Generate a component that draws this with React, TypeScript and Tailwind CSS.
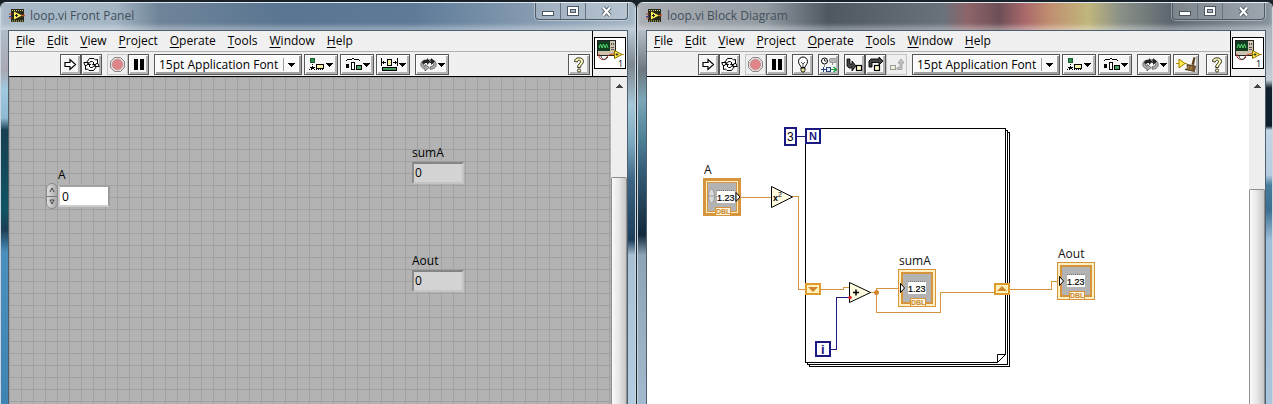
import { useState, type ReactNode } from "react"

const MENUS = ["File", "Edit", "View", "Project", "Operate", "Tools", "Window", "Help"]

const FONTS = ["15pt Application Font", "13pt System Font", "13pt Dialog Font"]

const Pixels = ({ w, h, children }: { w: number; h: number; children: ReactNode }) => (
  <svg width={w} height={h} viewBox={`0 0 ${w} ${h}`} shapeRendering="crispEdges" className="shrink-0" aria-hidden="true">
    {children}
  </svg>
)

const RunIcon = () => (
  <svg width="13" height="13" viewBox="0 0 13 13" aria-hidden="true">
    <path d="M1 4.5h5v-3l5.5 5-5.5 5v-3H1z" fill="#fff" stroke="#000" strokeWidth="1.2" />
  </svg>
)

const RunLoopIcon = () => (
  <svg width="17" height="15" viewBox="0 0 17 15" aria-hidden="true">
    <g fill="#fff" stroke="#000" strokeWidth="1" strokeLinejoin="round">
      <path d="M3.500 5.500L6.500 1.500H11l1.500 1.500 2-.5v5H9.500L11 6 9.500 4.500H7.500L6 6.500z" />
      <path d="M13.500 9.500l-3 4H6L4.500 12l-2 .5v-5h5L6 9l1.500 1.500h2L11 8.500z" />
      <path d="M.8 5.500h4.500l-1.500 3H2z" />
      <path d="M16.200 9.500h-4.500l1.500-3H15z" />
    </g>
  </svg>
)

const AbortIcon = () => (
  <svg width="17" height="17" viewBox="0 0 17 17" aria-hidden="true">
    <path d="M5.500 1.500h6l4 4v6l-4 4h-6l-4-4v-6z" fill="#e3d6d6" stroke="#8d8585" />
    <circle cx="8.500" cy="8.500" r="5" fill="#e08487" stroke="#c58f90" />
  </svg>
)

const PauseIcon = () => (
  <Pixels w={10} h={11}>
    <path d="M0 0h4v11H0zM6 0h4v11H6z" />
  </Pixels>
)

const BulbIcon = () => (
  <svg width="14" height="17" viewBox="0 0 14 17" aria-hidden="true">
    <path d="M5 11.500c0-2-2.500-3-2.500-6a4.500 4.500 0 0 1 9 0c0 3-2.500 4-2.500 6z" fill="#fff" stroke="#000" />
    <path d="M5 6l2 2 2-2M7 8v3" fill="none" stroke="#222" strokeWidth=".8" />
    <path d="M5 12h4v2.500L8 16H6l-1-1.500z" fill="#efe9a0" stroke="#000" strokeWidth=".9" />
  </svg>
)

const RetainIcon = () => (
  <svg width="18" height="16" viewBox="0 0 18 16" aria-hidden="true">
    <circle cx="4.500" cy="4" r="3" fill="#fff" stroke="#000" />
    <path d="M4.500 2v2h2" fill="none" stroke="#000" strokeWidth=".8" />
    <rect x="9.500" y="1.500" width="7" height="4" rx="1" fill="#b5b5b5" stroke="#999" />
    <path d="M4.500 7v3M12.500 6v2" stroke="#888" />
    <path d="M1 12.500h5M3.500 10v5" stroke="#27407c" />
    <rect x="6.500" y="10.500" width="4" height="4" fill="#dfe9ff" stroke="#27407c" />
    <path d="M11 12.500h5M13.500 10l3 2.500-3 2.500" fill="none" stroke="#129a35" strokeWidth="1.2" />
  </svg>
)

const StepIntoIcon = () => (
  <svg width="17" height="14" viewBox="0 0 17 14" aria-hidden="true">
    <path d="M1 1h3v5h2V3l4 5-4 5v-3H3L1 8z" fill="#444" stroke="#000" strokeWidth=".8" />
    <rect x="10.500" y="7.500" width="5" height="5" fill="#fffbd0" stroke="#000" strokeWidth="1.2" />
  </svg>
)

const StepOverIcon = () => (
  <svg width="16" height="15" viewBox="0 0 16 15" aria-hidden="true">
    <path d="M1 10V4l2-2h8V0l4 4-4 4V5.500H4V10z" fill="#444" stroke="#000" strokeWidth=".9" />
    <rect x="6.500" y="8.500" width="5" height="5" fill="#fffbd0" stroke="#000" strokeWidth="1.2" />
  </svg>
)

const StepOutIcon = () => (
  <svg width="16" height="14" viewBox="0 0 16 14" aria-hidden="true">
    <rect x="1.500" y="7.500" width="5" height="4" fill="#f3f1dc" stroke="#999" />
    <path d="M8 11.500h5V5h2l-3-4-3 4h2v4.500H8z" fill="#c4c4c4" stroke="#999" strokeWidth=".8" />
  </svg>
)

const DropArrow = () => (
  <Pixels w={7} h={4}>
    <path d="M0 0h7v1H0zM1 1h5v1H1zM2 2h3v1H2zM3 3h1v1H3z" />
  </Pixels>
)

const AlignIcon = () => (
  <Pixels w={16} h={13}>
    <path d="M1 0h5v5H1z" fill="#1d5f33" />
    <path d="M2 1h3v3H2z" fill="#2f8a4c" />
    <path d="M3 6h1v1H3zM3 8h1v2H3zM1 9h5v1H1zM2 10h3v1H2zM0 11h1v1H0zM2 12h1v-1H2zM5 11h1v1H5z" />
    <path d="M7 6h8v5H7z" />
    <path d="M8 7h6v3H8z" fill="#f7f3a6" />
    <path d="M7 11h1v1H7zM9 11h1v1H9zM11 11h1v1h-1zM13 11h1v1h-1z" />
  </Pixels>
)

const DistributeIcon = () => (
  <Pixels w={17} h={13}>
    <path d="M1 2h1v1H1zM2 1h5v1H2zM7 0h2v1H7zM9 1h5v1H9zM14 2h1v1h-1zM1 6h3v4H1zM6 4h4v8H6zM11 7h6v5h-6z" />
    <path d="M7 5h2v6H7z" fill="#fff" />
    <path d="M12 8h4v3h-4z" fill="#46a562" />
  </Pixels>
)

const ResizeIcon = () => (
  <Pixels w={17} h={13}>
    <path d="M0 0h1v8H0zM16 0h1v8h-1zM1 4h4v1H1zM2 3h1v3H2zM12 4h4v1h-4zM14 3h1v3h-1zM6 1h5v7H6zM1 9h15v4H1z" />
    <path d="M7 2h3v5H7z" fill="#f7f3a6" />
    <path d="M2 10h13v2H2z" fill="#3f9559" />
  </Pixels>
)

const ReorderIcon = () => (
  <svg width="17" height="14" viewBox="0 0 17 14" aria-hidden="true">
    <path d="M5 2C2 2.500.8 4.500.8 6.500.8 9 3 10.500 5 10.800V13l4-3.500-4-3v2C3.500 8 3 7 3.500 6L6 4z" fill="#b0b0b0" stroke="#555" strokeWidth=".8" />
    <path d="M12 2c3 .5 4.200 2.500 4.200 4.500 0 3-2.200 4.500-6.200 4.800V8.800c3-.3 4-1.300 3.500-2.800L11 4z" fill="#b0b0b0" stroke="#555" strokeWidth=".8" />
    <path d="M2 4.500C3 2.500 5 1.500 7 1.500V0l3.500 3.500L7 7V5C5 5 4 5.500 3.500 6.500z" fill="#222" />
    <path d="M9 1.500h2V0l4 3.500L11 7V5H9l2-1.500z" fill="#222" />
  </svg>
)

const CleanUpIcon = () => (
  <svg width="21" height="15" viewBox="0 0 21 15" aria-hidden="true">
    <path d="M0 6.500h11" stroke="#b88a00" />
    <path d="M3 2v9l6-4.500z" fill="#fff04a" stroke="#a57c00" />
    <path d="M17.500 0l2 .5L18 8l-2.500-.5z" fill="#5a3d1c" />
    <path d="M11 7.500l8.500 1.500L18.500 14.500 9 12.500l2.500-1z" fill="#7d5a2b" stroke="#3f2c10" strokeWidth=".8" />
    <path d="M13 9l-1.500 3M15.500 9.500l-1 3.500" stroke="#c9a662" strokeWidth=".8" />
  </svg>
)

const HelpIcon = () => (
  <svg width="12" height="16" viewBox="0 0 12 16" aria-hidden="true">
    <path
      d="M1.500 4.500C1.500 2 3.500.8 6 .8s4.500 1.400 4.500 3.700C10.500 7 7.500 7.500 7.500 10.500h-3C4.500 7 7.500 6.500 7.500 4.700 7.500 3.700 7 3.300 6 3.300s-1.600.5-1.600 1.700z"
      fill="#fdf9b0"
      stroke="#222"
      strokeWidth=".9"
    />
    <circle cx="6" cy="13.500" r="1.600" fill="#fdf9b0" stroke="#222" strokeWidth=".9" />
  </svg>
)

const ViIcon = () => (
  <svg width="16" height="16" viewBox="0 0 16 16" aria-hidden="true">
    <rect x="2" y="1" width="13" height="13" fill="#2a2a18" />
    <path d="M3 2.500h12M3 13h12" stroke="#d8d27c" strokeDasharray="1 1" />
    <path d="M0 6h3M0 10h3" stroke="#c0392b" />
    <path d="M0 8.500h3" stroke="#24489a" />
    <path d="M13 7.500h3" stroke="#d0552b" strokeWidth="1.5" />
    <path d="M5 3.500v8l8-4z" fill="#ffee57" />
    <path d="M6 7.500h3M7.500 6v3" stroke="#222" />
  </svg>
)

const ConnectorIcon = () => (
  <svg width="32" height="32" viewBox="0 0 32 32" className="block" role="img" aria-label="VI icon 1">
    <rect x=".5" y=".5" width="31" height="31" fill="#fff" stroke="#000" />
    <g shapeRendering="crispEdges">
      <rect x="3" y="3" width="19" height="16" fill="#222" />
      <rect x="4" y="4" width="17" height="14" fill="#cfc2ae" />
      <rect x="4" y="4" width="12" height="10" fill="#123d1e" />
      <path d="M17 6h1v2h-1zM19 6h1v2h-1zM17 10h3v1h-3zM17 12h3v1h-3z" fill="#555" />
    </g>
    <path d="M5 11l1.500-4L8 11l1.500-4 1.500 4 1.500-4 1.500 4" fill="none" stroke="#52d66e" />
    <path d="M5 17v3c3 4 6 3 8 0s5-3 8-3" fill="none" stroke="#c2312a" />
    <path d="M7 19c1 5 5 4 7 1" fill="none" stroke="#333" />
    <path d="M27 17.500h3M17 17.500h4" stroke="#d98c1e" />
    <path d="M20.500 13.500v8l7.500-4z" fill="#ffee4d" stroke="#8d6f00" />
    <path d="M21.500 17.500h3M23 16v3" stroke="#222" strokeWidth=".8" />
    <text x="24" y="30" fontSize="9" fontFamily="Open Sans, sans-serif">1</text>
  </svg>
)

interface ToolButtonProps {
  label: string
  width?: string
  disabled?: boolean
  children: ReactNode
}

function ToolButton({ label, width = "w-[21px]", disabled, children }: ToolButtonProps) {
  const look = disabled
    ? "border-[#c4c4c4] bg-[#efefef]"
    : "border-[#585858] bg-[#f6f6f6] shadow-[inset_1px_1px_0_#ffffff,inset_-2px_-2px_0_#b4b4b4]"
  return (
    <button
      type="button"
      aria-label={label}
      disabled={disabled}
      className={`flex h-[21px] shrink-0 items-center justify-center gap-px border ${width} ${look}`}
    >
      {children}
    </button>
  )
}

function FontPicker() {
  return (
    <div className="relative w-[148px]">
      <select
        aria-label="Text settings"
        className="block h-[21px] w-full appearance-none border border-[#585858] bg-[#fafafa] pl-[4px] text-[12px] leading-[17px] text-black shadow-[inset_1px_1px_0_#ffffff,inset_-2px_-2px_0_#a0a0a0]"
      >
        {FONTS.map((font) => (
          <option key={font}>{font}</option>
        ))}
      </select>
      <span className="pointer-events-none absolute inset-y-[4px] right-[7px] flex items-center border-l border-[#a0a0a0] pl-[4px]">
        <DropArrow />
      </span>
    </div>
  )
}

const Group = ({ gap = "gap-0", children }: { gap?: string; children: ReactNode }) => (
  <div className={`flex shrink-0 ${gap}`}>{children}</div>
)

function Toolbar({ diagram }: { diagram?: boolean }) {
  return (
    <div role="toolbar" className="flex h-[24px] items-start gap-[5px] pt-[2px] pr-[2px] pl-[51px]">
      <Group>
        <ToolButton label="Run"><RunIcon /></ToolButton>
        <ToolButton label="Run continuously"><RunLoopIcon /></ToolButton>
      </Group>
      <Group>
        <ToolButton label="Abort execution" disabled><AbortIcon /></ToolButton>
        <ToolButton label="Pause"><PauseIcon /></ToolButton>
      </Group>
      {diagram && (
        <>
          <ToolButton label="Highlight execution"><BulbIcon /></ToolButton>
          <ToolButton label="Retain wire values"><RetainIcon /></ToolButton>
          <Group>
            <ToolButton label="Step into"><StepIntoIcon /></ToolButton>
            <ToolButton label="Step over"><StepOverIcon /></ToolButton>
            <ToolButton label="Step out" disabled><StepOutIcon /></ToolButton>
          </Group>
        </>
      )}
      <Group gap="gap-[2px]">
        <FontPicker />
        <ToolButton label="Align objects" width="w-[34px]"><AlignIcon /><DropArrow /></ToolButton>
        <ToolButton label="Distribute objects" width="w-[34px]"><DistributeIcon /><DropArrow /></ToolButton>
        {!diagram && (
          <ToolButton label="Resize objects" width="w-[34px]"><ResizeIcon /><DropArrow /></ToolButton>
        )}
      </Group>
      <Group gap="gap-[2px]">
        <ToolButton label="Reorder" width="w-[34px]"><ReorderIcon /><DropArrow /></ToolButton>
        {diagram && <ToolButton label="Clean up diagram" width="w-[26px]"><CleanUpIcon /></ToolButton>}
      </Group>
      <div className="ml-auto">
        <ToolButton label="Show context help" width="w-[22px]"><HelpIcon /></ToolButton>
      </div>
    </div>
  )
}

function CaptionButtons() {
  return (
    <div className="flex h-[17px] overflow-hidden rounded-b-[4px] border border-t-0 border-[#4d5a66] bg-white/20 shadow-[0_0_0_1px_rgba(255,255,255,0.35)]">
      <button type="button" aria-label="Minimize" className="flex w-[25px] items-center justify-center border-r border-[#66737f] pt-[4px]">
        <Pixels w={12} h={5}>
          <path d="M0 0h12v5H0z" fill="#4c5661" />
          <path d="M1 1h10v3H1z" fill="#fff" />
        </Pixels>
      </button>
      <button type="button" aria-label="Maximize" className="flex w-[25px] items-center justify-center border-r border-[#66737f]">
        <Pixels w={12} h={10}>
          <path d="M0 0h12v10H0z" fill="#4c5661" />
          <path d="M1 1h10v8H1z" fill="#fff" />
          <path d="M3 3h6v4H3z" fill="#4c5661" />
          <path d="M4 4h4v2H4z" fill="#a9b6c2" />
        </Pixels>
      </button>
      <button type="button" aria-label="Close" className="flex w-[41px] items-center justify-center">
        <svg width="13" height="11" viewBox="0 0 13 11" aria-hidden="true">
          <path d="M3 1.500l7 8M10 1.500l-7 8" stroke="#4c5661" strokeWidth="4" />
          <path d="M3 1.500l7 8M10 1.500l-7 8" stroke="#fff" strokeWidth="2.200" />
        </svg>
      </button>
    </div>
  )
}

function ScrollBar({ gap }: { gap: string }) {
  return (
    <div className={`flex w-[16px] shrink-0 flex-col bg-[#eeeeee] ${gap}`}>
      <div className="flex h-[17px] shrink-0 items-center justify-center">
        <Pixels w={7} h={4}>
          <path d="M3 0h1v1H3zM2 1h3v1H2zM1 2h5v1H1zM0 3h7v1H0z" fill="#444" />
        </Pixels>
      </div>
      <div className="flex-1 rounded-t-[2px] border border-b-0 border-[#8e8e8e] bg-linear-to-r from-[#fafafa] via-[#e6e6e6] to-[#c6c6c6]" />
    </div>
  )
}

interface WindowProps {
  title: string
  titleBar: string
  leftEdge: string
  rightEdge: string
  scrollGap: string
  diagram?: boolean
  children: ReactNode
}

function Window({ title, titleBar, leftEdge, rightEdge, scrollGap, diagram, children }: WindowProps) {
  return (
    <section aria-label={title} className="flex min-w-0 flex-1 flex-col overflow-hidden rounded-t-[6px] border-x border-[#c9d6e0]">
      <header className={`flex h-[28px] shrink-0 items-start justify-between border-t border-[#dfe7ee] pr-[7px] pl-[8px] shadow-[inset_0_-4px_4px_rgba(255,255,255,0.35)] ${titleBar}`}>
        <div className="flex items-center gap-[5px] pt-[4px]">
          <ViIcon />
          <h1 className="text-[12px] leading-[18px] text-[#43505c]">{title}</h1>
        </div>
        <CaptionButtons />
      </header>
      <div className="flex min-h-0 flex-1">
        <div className={`shrink-0 ${leftEdge}`} />
        <div className="flex min-w-0 flex-1 flex-col border-x border-t border-[#4b5f70] bg-[#f0f0f0]">
          <div className="flex h-[46px] shrink-0 border-b border-black">
            <div className="min-w-0 flex-1">
              <nav aria-label={`${title} menu`} className="flex h-[21px] border-b border-[#b0b0b0] pl-px">
                {MENUS.map((menu) => (
                  <button key={menu} type="button" className="px-[6px] text-[12px] leading-[18px] text-black">
                    <span className="underline underline-offset-2">{menu[0]}</span>
                    {menu.slice(1)}
                  </button>
                ))}
              </nav>
              <Toolbar diagram={diagram} />
            </div>
            <div className="w-[35px] border-l border-black pt-[6px] pl-px">
              <ConnectorIcon />
            </div>
          </div>
          <div className="flex min-h-0 flex-1">
            {children}
            <ScrollBar gap={scrollGap} />
          </div>
        </div>
        <div className={`shrink-0 ${rightEdge}`} />
      </div>
    </section>
  )
}

function Indicator({ name, position }: { name: string; position: string }) {
  return (
    <div className={`absolute ${position}`}>
      <label htmlFor={name} className="block pb-px text-[12px] leading-[16px]">{name}</label>
      <output
        id={name}
        className="block h-[22px] w-[52px] border-2 border-t-[#858585] border-r-[#c4c4c4] border-b-[#c4c4c4] border-l-[#8c8c8c] bg-[#d3d3d3] pl-px text-[12px] leading-[18px]"
      >
        0
      </output>
    </div>
  )
}

function FrontPanel() {
  const [value, setValue] = useState(0)
  return (
    <main className="relative min-w-0 flex-1 overflow-hidden bg-[#b3b3b3] bg-[linear-gradient(to_right,#a0a0a0_1px,transparent_1px),linear-gradient(to_bottom,#a0a0a0_1px,transparent_1px)] bg-size-[12px_12px] text-black">
      <div className="absolute top-[90px] left-[37px]">
        <label htmlFor="A" className="block pl-[12px] text-[12px] leading-[16px]">A</label>
        <div className="flex items-center">
          <div className="flex h-[26px] w-[12px] flex-col overflow-hidden rounded-full border border-[#8a8a8a] bg-linear-to-r from-[#dedede] to-[#a8a8a8]">
            <button type="button" aria-label="Increment A" onClick={() => setValue(value + 1)} className="flex flex-1 items-center justify-center border-b border-[#777777]">
              <svg width="6" height="6" viewBox="0 0 6 6"><path d="M1 5l2-4 2 4" fill="none" stroke="#444" /></svg>
            </button>
            <button type="button" aria-label="Decrement A" onClick={() => setValue(value - 1)} className="flex flex-1 items-center justify-center">
              <svg width="6" height="6" viewBox="0 0 6 6"><path d="M1 1l2 4 2-4z" fill="none" stroke="#444" /></svg>
            </button>
          </div>
          <input
            id="A"
            value={value}
            onChange={(e) => setValue(Number(e.target.value) || 0)}
            className="h-[22px] w-[52px] border-2 border-t-[#a2a2a2] border-r-[#9b9b9b] border-b-[#cccccc] border-l-[#cccccc] bg-white pl-[2px] text-[12px]"
          />
        </div>
      </div>
      <Indicator name="sumA" position="top-[68px] left-[403px]" />
      <Indicator name="Aout" position="top-[176px] left-[403px]" />
    </main>
  )
}

const ORANGE = "#d6943c"
const NAVY = "#1a1a80"

function Terminal({ x, y, control }: { x: number; y: number; control?: boolean }) {
  return (
    <g transform={`translate(${x} ${y})`}>
      <g shapeRendering="crispEdges">
        <rect width="38" height="38" fill={ORANGE} />
        {control ? (
          <>
            <rect x="3" y="3" width="32" height="32" fill="#fff0c4" />
            <rect x="4" y="4" width="30" height="30" fill={ORANGE} />
            <rect x="5" y="5" width="28" height="28" fill="#b3b3b3" />
          </>
        ) : (
          <>
            <rect x="1" y="1" width="36" height="36" fill="#fff0c4" />
            <rect x="3" y="3" width="32" height="32" fill={ORANGE} />
            <rect x="5" y="5" width="28" height="28" fill="#b3b3b3" />
          </>
        )}
        <rect x={control ? 14 : 10} y="13" width="18" height="12" fill="#fff" />
        <path d={control ? "M14 12.500h18" : "M10 12.500h18"} stroke="#777" strokeDasharray="1 1" />
        <rect x="12" y="29" width="16" height="8" fill={ORANGE} />
        <rect x="13" y="30" width="14" height="7" fill="#fff6dc" />
      </g>
      {control && (
        <>
          <ellipse cx="8.500" cy="18" rx="3" ry="7" fill="#d9d9d9" stroke="#999" />
          <path d="M5.500 18h6" stroke="#999" />
        </>
      )}
      <path d={control ? "M33 14.500v9l4-4.500z" : "M2.500 14.500v9l4-4.500z"} fill="#fff" stroke="#000" />
      <text x={control ? 14 : 10} y="23" fontSize="9" stroke="#000" strokeWidth=".2">1.23</text>
      <text x="13" y="36" fontSize="7" fontWeight="700" fill="#c98a2c">DBL</text>
    </g>
  )
}

function BlockDiagram() {
  return (
    <main className="min-w-0 flex-1 overflow-hidden bg-white">
      <svg width="600" height="327" viewBox="0 0 600 327" fontFamily="Liberation Sans, sans-serif" role="img" aria-label="For loop diagram">
        {/* stacked sheets of the for loop, with the front one's corner turned up */}
        <g fill="none" stroke="#000" shapeRendering="crispEdges">
          <path d="M350.500 285.500h-192v-234h200v226" />
          <path d="M160.500 286v1.500h200v-234H359" />
          <path d="M162.500 288v1.500h200v-234H361" />
        </g>
        <path d="M350.500 285.500v-8h8z" fill="#fff" stroke="#000" />

        <g fill="none" stroke={ORANGE} shapeRendering="crispEdges">
          <path d="M94 120.500h30M145 119.500h6.500v93h6.500" />
          <path d="M174 212.500h22.500v-2h6M223 215.500h6.500v-4H251" />
          <path d="M229.500 215v20.500h64v-20H347M363 212.500h41.500v-8h7" />
        </g>
        <g fill="none" stroke={NAVY} shapeRendering="crispEdges">
          <path d="M150 59.500h8M184 272.500h5.500v-52H202" />
        </g>

        <g fill="#fff" stroke={NAVY} strokeWidth="2">
          <rect x="138" y="51" width="11" height="17" />
          <rect x="159" y="52" width="14" height="14" />
          <rect x="169" y="265" width="14" height="14" />
        </g>
        <text x="140" y="64" fontSize="12">3</text>
        <text x="162" y="63" fontSize="11" fontWeight="700" fill={NAVY}>N</text>
        <text x="174" y="277" fontSize="13" fontWeight="700" fill={NAVY}>i</text>

        <g fill="#fff2b8" stroke="#df9a30" strokeWidth="2">
          <rect x="159" y="207" width="14" height="10" />
          <rect x="348" y="207" width="14" height="10" />
        </g>
        <path d="M161 210h10l-5 5zM350 214h10l-5-5z" fill="#d2852c" />

        <g fill="#fffbe0" stroke="#000">
          <path d="M124.500 109.500v21l21-10.500z" />
          <path d="M202.500 205.500v20l21-10z" />
        </g>
        <text x="126" y="124" fontSize="9" fontWeight="700">x</text>
        <text x="131" y="120" fontSize="7">2</text>
        <path d="M206 215.500h6M209 212.500v6" stroke="#000" strokeWidth="1.5" />
        <circle cx="229.500" cy="215.500" r="2.500" fill="#d2852c" />
        <circle cx="203" cy="220.500" r="1.800" fill="#d8262b" />

        <Terminal x={56} y={101} control />
        <Terminal x={251} y={192} />
        <Terminal x={410} y={185} />

        <g fontSize="12" fontFamily="Open Sans, sans-serif" fill="#111">
          <text x="57" y="97">A</text>
          <text x="252" y="188">sumA</text>
          <text x="411" y="181">Aout</text>
        </g>
      </svg>
    </main>
  )
}

export default function App() {
  return (
    <div className="flex h-screen gap-px overflow-hidden bg-[#1a2229] pt-[2px] font-['Open_Sans',sans-serif]">
      <Window
        title="loop.vi Front Panel"
        titleBar="bg-[linear-gradient(to_right,#a9b9c7_0%,#a3b4c3_18%,#6f8499_25%,#597591_45%,#5d7b98_65%,#8298ae_82%,#a6b7c6_100%)]"
        leftEdge="w-[7px] bg-[linear-gradient(to_bottom,#aebdca_0px,#a9a9b4_40px,#9fc9de_60px,#8dbbd4_88px,#173f52_100px,#0f5463_180px,#1c3f55_200px,#4a8fbd_222px,#3f83b3_100%)]"
        rightEdge="w-[7px] bg-[linear-gradient(to_bottom,#b9c9d6_0px,#7d868e_35px,#a5c8d8_75px,#78a6bd_115px,#3c6484_150px,#1c3e5b_210px,#a9c0d3_225px,#b4cde1_100%)]"
        scrollGap="gap-[83px]"
      >
        <FrontPanel />
      </Window>
      <Window
        title="loop.vi Block Diagram"
        titleBar="bg-[linear-gradient(to_right,#a9aeb3_0%,#939ba3_20%,#4d5861_30%,#69727b_48%,#8d6468_52%,#6d4f57_57%,#a9686a_61%,#c08f70_65%,#c0b67c_71%,#8b9188_76%,#5c666f_84%,#87939d_100%)]"
        leftEdge="w-[8px] bg-[linear-gradient(to_bottom,#b4bec6_0px,#6d777f_40px,#7ba6b8_70px,#4d8095_110px,#365d78_140px,#12293b_205px,#8ca4b5_225px,#a3bace_100%)]"
        rightEdge="w-[6px] bg-[linear-gradient(to_bottom,#a9b3bc_0px,#c4ced6_50px,#12202d_58px,#0f1e2b_96px,#c3d5e6_100px,#b5cce0_145px,#467c9c_155px,#3a6f92_180px,#9fbfd8_210px,#a9c5dc_100%)]"
        scrollGap="gap-[95px]"
        diagram
      >
        <BlockDiagram />
      </Window>
    </div>
  )
}
